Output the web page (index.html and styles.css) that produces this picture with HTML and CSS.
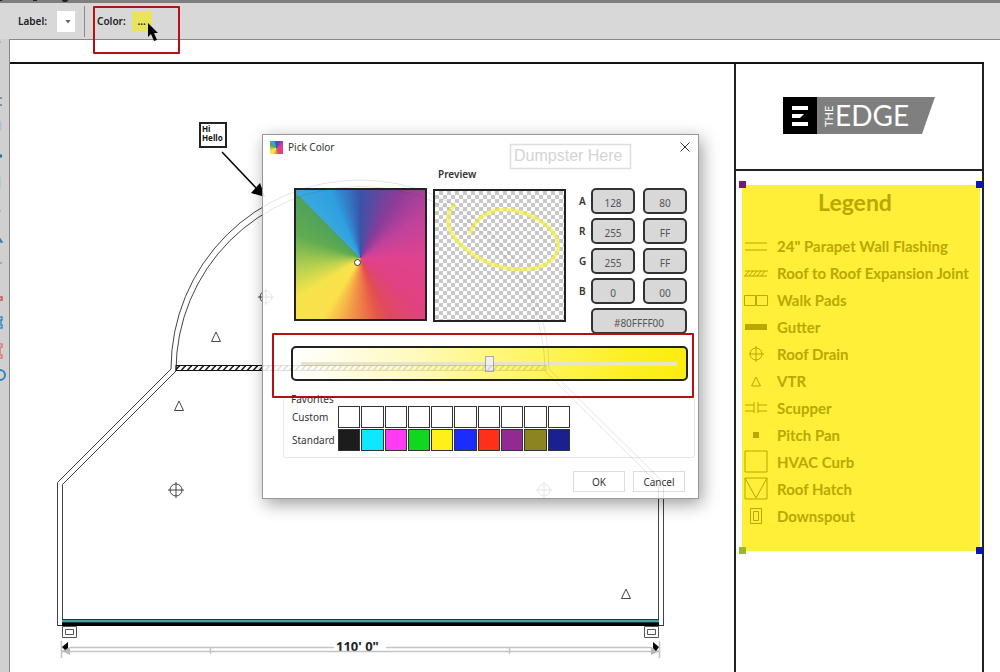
FILE: index.html
```html
<!DOCTYPE html>
<html lang="en">
<head>
<meta charset="utf-8">
<title>Roof plan – Pick Color</title>
<link rel="stylesheet" href="styles.css">
</head>
<body>
<div class="app">
  <div class="window-edge">
    <svg width="70" height="3" viewBox="0 0 70 3"><path d="M0 0h2v1H0zM33 0h4v1h-4zM62 0h6v1l-2 1h-3z" fill="#222"/></svg>
  </div>
  <header class="toolbar">
    <label for="label-select">Label:</label>
    <span class="drop"><select id="label-select" aria-label="Label"><option></option></select></span>
    <span class="divider"></span>
    <label for="color-button">Color:</label>
    <button id="color-button" class="color-button" type="button">...</button>
    <div class="callout"></div>
    <svg class="cursor" width="12" height="20" viewBox="0 0 12 20"><path d="M1 1v14l3-3 3 7 3-1-3-7h4z" fill="#000"/></svg>
  </header>

  <div class="workspace">
    <nav class="tools" aria-label="Tools">
      <svg width="9" height="360" viewBox="0 40 9 360" fill="none" stroke-width="1.5">
        <path d="M0 43h1M0 212h1" stroke="#aaa"/>
        <path d="M0 99h2M0 106h2" stroke="#5d7f97"/>
        <path d="M0 122q2 5 0 10M0 178v12" stroke="#a9c4d6"/>
        <path d="M0 157h2" stroke="#1d6fa8" stroke-width="3"/>
        <path d="M0 240l2 3H0z" stroke="#3b7dab"/>
        <path d="M0 264h2" stroke="#9ab" stroke-width="2"/>
        <path d="M0 298h2v3H0" stroke="#d05050"/>
        <path d="M0 318h2v3H0M1 321v4M0 326h2v3H0" stroke="#3b8cc4"/>
        <path d="M0 345h2v3H0M0 356h2v3H0M0 348v8" stroke="#e07a7a"/>
        <path d="M0 371a5 5 0 0 1 0 10" stroke="#2d86c8" stroke-width="2"/>
      </svg>
    </nav>

    <main class="canvas">
      <div class="sheet">
        <div class="sheet-plan"></div>
        <aside class="title-block">
          <div class="logo-cell">
            <svg class="logo" width="152" height="37" viewBox="0 0 152 37" role="img" aria-label="The Edge">
              <path d="M0 0h34v37H0z" fill="#000"/>
              <path d="M34 0h118l-13 37H34z" fill="#7f7f7f"/>
              <path d="M9 9h16v4H9zM9 17h12l-4 4H9zM9 25h16v4H9z" fill="#fff"/>
              <text x="52" y="29" class="logo-name">EDGE</text>
              <text transform="translate(50 30) rotate(-90)" class="logo-the">THE</text>
            </svg>
          </div>
          <section class="legend">
            <i class="handle tl"></i><i class="handle tr"></i><i class="handle bl"></i><i class="handle br"></i>
            <h2>Legend</h2>
            <ul>
              <li><svg viewBox="0 0 24 24"><path d="M1 9h22M1 16h22"/></svg>24" Parapet Wall Flashing</li>
              <li><svg viewBox="0 0 24 24"><path d="M1 10h23M0 15h23M1 15l4-5M5 15l4-5M9 15l4-5M13 15l4-5M17 15l4-5"/></svg>Roof to Roof Expansion Joint</li>
              <li><svg viewBox="0 0 24 24"><path d="M.5 7.500h11v10H.5zM12.500 7.500h11v10h-11z"/></svg>Walk Pads</li>
              <li><svg viewBox="0 0 24 24"><path class="solid" d="M1 9h22v6H1z"/></svg>Gutter</li>
              <li><svg viewBox="0 0 24 24"><circle cx="12" cy="12" r="6"/><path d="M12 4v16M5 12h15"/></svg>Roof Drain</li>
              <li><svg viewBox="0 0 24 24"><path d="M12 8l4.500 9h-9z"/></svg>VTR</li>
              <li><svg viewBox="0 0 24 24"><path d="M1 9h9M1 15h9M10 6v11M14 6v11M14 9h9M14 15h9"/></svg>Scupper</li>
              <li><svg viewBox="0 0 24 24"><path class="solid" d="M9 9h6v6H9z"/></svg>Pitch Pan</li>
              <li><svg viewBox="0 0 24 24"><path d="M1 1h22v21H1z"/></svg>HVAC Curb</li>
              <li><svg viewBox="0 0 24 24"><path d="M1 1h22v21H1zM1 1l11 20L23 1"/></svg>Roof Hatch</li>
              <li><svg viewBox="0 0 24 24"><path d="M6.500 4.500h11v15h-11zM9.500 7.500h5v9h-5z"/></svg>Downspout</li>
            </ul>
          </section>
        </aside>
      </div>

      <svg class="plan" width="725" height="633" viewBox="10 40 725 633">
        <defs>
          <pattern id="hatch" width="6" height="7" patternUnits="userSpaceOnUse" y="365"><path d="M0 7L6 0" stroke="#222" stroke-width="1.500"/></pattern>
          <g id="drain"><circle r="6"/><path d="M-8 0H8M0-8V8"/></g>
          <path id="vtr" d="M0-5L4.500 4.500h-9z"/>
          <g id="outline" fill="none" stroke="#444">
            <path d="M57.500 625V482.500L171 369A189 189 0 0 1 549 369L663.500 482.500V625"/>
            <path d="M62.500 620V484.500L176 371A184 184 0 0 1 545 371L658.500 484.500V620"/>
            <rect x="176" y="365.500" width="370" height="5" fill="url(#hatch)" stroke="#111"/>
            <use href="#vtr" x="216" y="337"/>
            <use href="#vtr" x="179" y="406"/>
            <use href="#vtr" x="626" y="594"/>
            <use href="#drain" x="176" y="490"/>
            <use href="#drain" x="266" y="297"/>
            <use href="#drain" x="544" y="490"/>
            <path d="M222 152L257 189" stroke="#000" stroke-width="1.500"/>
            <path d="M265 197l-14-4 9-10z" fill="#000" stroke="none"/>
          </g>
        </defs>
        <use href="#outline"/>
        <path d="M57 625.500h5M659 625.500h5" stroke="#333"/>
        <rect x="62" y="619" width="597" height="4" fill="#173c40"/>
        <rect x="62" y="620" width="597" height="2" fill="#4d9ea2"/>
        <rect x="62" y="623" width="597" height="3" fill="#000"/>
        <g fill="none" stroke="#555">
          <path d="M62.500 626.500h14v11h-14zM65.500 629.500h8v5h-8zM644.500 626.500h14v11h-14zM647.500 629.500h8v5h-8z"/>
        </g>
        <text x="336" y="651" class="dimension">110' 0"</text>
        <g stroke="#c4c4c4" fill="#b8b8b8">
          <path d="M70 647.500H334M386 647.500H652M62 651.500H659M61.500 641v17M659.500 641v17M210.500 648v6M509.500 648v6" fill="none" stroke-width="1.500"/>
          <path d="M62 651l8-4v8zM659 651l-8-4v8z" stroke="none"/>
        </g>
        <path d="M68 642v6l-3 2-3-3zM653 642l6 5-3 4-3-3z" fill="#000"/>
        <rect x="200" y="123" width="26" height="24" fill="#fff" stroke="#222" stroke-width="2"/>
        <text x="202" y="132" class="note">Hi</text>
        <text x="202" y="141" class="note">Hello</text>
      </svg>

      <section class="dialog" role="dialog" aria-labelledby="dialog-title">
        <header class="dialog-title">
          <i class="wheel-icon"></i>
          <h1 id="dialog-title">Pick Color</h1>
          <button class="close" type="button" aria-label="Close"><svg width="10" height="10" viewBox="0 0 10 10"><path d="M.5.5l9 9M9.500.5l-9 9" stroke="#333" fill="none"/></svg></button>
        </header>

        <div class="picker">
          <div class="wheel"><i class="wheel-dot"></i></div>
          <div class="preview-column">
            <h2>Preview</h2>
            <div class="preview">
              <svg viewBox="0 0 130 130"><path d="M20 13C5 30 15 51 45 68C72 84 119 84 124 58C126 38 96 19 70 19C53 19 41 28 35 43" fill="none" stroke="#f4f04a" stroke-opacity=".7" stroke-width="4"/></svg>
            </div>
          </div>
          <div class="channels">
            <label for="a">A</label><input id="a" value="128"><input aria-label="A hex" value="80">
            <label for="r">R</label><input id="r" value="255"><input aria-label="R hex" value="FF">
            <label for="g">G</label><input id="g" value="255"><input aria-label="G hex" value="FF">
            <label for="b">B</label><input id="b" value="0"><input aria-label="B hex" value="00">
            <input class="hex" aria-label="Color code" value="#80FFFF00">
          </div>
        </div>

        <div class="alpha">
          <div class="alpha-bar"><input type="range" min="0" max="255" value="128" aria-label="Opacity"></div>
        </div>

        <fieldset class="favorites">
          <legend>Favorites</legend>
          <span>Custom</span>
          <div class="swatches">
            <button type="button" aria-label="Custom 1"></button><button type="button" aria-label="Custom 2"></button><button type="button" aria-label="Custom 3"></button><button type="button" aria-label="Custom 4"></button><button type="button" aria-label="Custom 5"></button><button type="button" aria-label="Custom 6"></button><button type="button" aria-label="Custom 7"></button><button type="button" aria-label="Custom 8"></button><button type="button" aria-label="Custom 9"></button><button type="button" aria-label="Custom 10"></button>
          </div>
          <span>Standard</span>
          <div class="swatches">
            <button type="button" class="black" aria-label="Black"></button><button type="button" class="cyan" aria-label="Cyan"></button><button type="button" class="magenta" aria-label="Magenta"></button><button type="button" class="green" aria-label="Green"></button><button type="button" class="yellow" aria-label="Yellow"></button><button type="button" class="blue" aria-label="Blue"></button><button type="button" class="red" aria-label="Red"></button><button type="button" class="purple" aria-label="Purple"></button><button type="button" class="olive" aria-label="Olive"></button><button type="button" class="navy" aria-label="Navy"></button>
          </div>
        </fieldset>

        <footer class="actions">
          <button type="button">OK</button>
          <button type="button">Cancel</button>
        </footer>

        <svg class="ghost" viewBox="263 135 435 363">
          <use href="#outline" opacity=".14"/>
          <rect x="510.500" y="144.500" width="120" height="24" fill="none" stroke="#dedede" stroke-width="1.500"/>
          <text x="514" y="161" class="ghost-text">Dumpster Here</text>
        </svg>
      </section>
    </main>
  </div>
</div>
</body>
</html>
```
FILE: styles.css
```css
* { box-sizing: border-box; }

body {
  margin: 0;
  font-family: "Noto Sans", "Open Sans", sans-serif;
  font-size: 10px;
  color: #333;
  background: #fff;
}

button, input, select { font: inherit; color: inherit; margin: 0; padding: 0; }
h1, h2, ul, fieldset { margin: 0; padding: 0; }
svg { display: block; }

.app { display: flex; flex-direction: column; height: 100vh; overflow: hidden; }
.window-edge { height: 3px; flex: none; background: #7e7e7e; }

/* Toolbar */
.toolbar {
  position: relative;
  z-index: 2;
  flex: none;
  display: flex;
  align-items: center;
  height: 36px;
  padding-left: 18px;
  background: #d8d8d8;
  font-weight: 600;
  color: #222;
}
.drop { position: relative; margin-left: 10px; }
.drop select {
  display: block;
  width: 18px;
  height: 21px;
  appearance: none;
  border: 0;
  border-radius: 0;
  background: #fff;
}
.drop::after {
  content: "";
  position: absolute;
  right: 4px;
  top: 9px;
  width: 6px;
  height: 4px;
  background: #666;
  clip-path: polygon(0 0, 100% 0, 50% 100%);
  pointer-events: none;
}
.divider { width: 1px; height: 31px; margin: 0 12px 0 9px; background: #8a8a8a; }
.color-button {
  width: 20px;
  height: 20px;
  margin-left: 6px;
  border: 0;
  background: #e9e45a;
  font-weight: 600;
}
.callout {
  position: absolute;
  left: 93px;
  top: 3px;
  width: 87px;
  height: 48px;
  border: 2px solid #b80f14;
  border-radius: 1px;
}
.cursor { position: absolute; left: 147px; top: 19px; }

/* Workspace */
.workspace { flex: 1; display: flex; min-height: 0; }
.tools { width: 9px; flex: none; background: #d0d0d0; overflow: hidden; }
.canvas {
  position: relative;
  flex: 1;
  display: flex;
  min-width: 0;
  padding: 22px 16px 0 0;
  border-left: 1px solid #888;
  border-top: 1px solid #888;
  background: #fff;
}
.sheet { flex: 1; display: flex; border-top: 2px solid #111; }
.sheet-plan { flex: 1; }
.title-block {
  width: 250px;
  border-left: 2px solid #222;
  border-right: 2px solid #222;
}
.logo-cell {
  display: flex;
  justify-content: center;
  padding: 33px 0 35px;
  border-bottom: 2px solid #222;
}
.logo-name { font: 28px Lato, sans-serif; fill: #fff; }
.logo-the { font: 11px Lato, sans-serif; fill: #fff; }

.legend {
  position: relative;
  margin: 14px 2px 0 6px;
  height: 366px;
  padding: 4px 0 0 2px;
  background: #ffef38;
  color: #b9a800;
  font-family: Lato, sans-serif;
  font-weight: 700;
}
.legend h2 { font-size: 23px; line-height: 26px; margin: 0 14px 17px 0; text-align: center; }
.legend ul { list-style: none; }
.legend li { display: flex; align-items: center; gap: 9px; height: 27px; font-size: 15px; white-space: nowrap; }
.legend svg { width: 24px; height: 24px; flex: none; fill: none; stroke: #b9a800; stroke-width: 1; }
.legend .solid { fill: #b9a800; stroke: none; }
.handle { position: absolute; width: 7px; height: 7px; background: #0a12c4; }
.tl { left: -3px; top: -4px; background: #761a78; }
.tr { right: -3px; top: -4px; }
.bl { left: -3px; bottom: -3px; background: #97b72c; }
.br { right: -3px; bottom: -3px; }

.plan { position: absolute; left: 0; top: 0; pointer-events: none; }
.dimension { font: 700 13px "Noto Sans", sans-serif; fill: #222; }
.note { font: 700 8px "Noto Sans", sans-serif; fill: #111; }

/* Colour dialog */
.dialog {
  position: absolute;
  left: 252px;
  top: 94px;
  width: 437px;
  padding-bottom: 6px;
  border: 1px solid #999;
  background: #fff;
  box-shadow: 3px 5px 16px rgba(0, 0, 0, .38);
}
.dialog-title { display: flex; align-items: center; gap: 5px; height: 24px; padding: 0 8px 0 7px; }
.dialog-title h1 { flex: 1; font-size: 10px; font-weight: 400; }
.close { border: 0; background: none; }
.wheel-icon, .wheel {
  background: conic-gradient(at 50% 53%, #3a53a8, #8a3c98 30deg, #c0429a 55deg, #e0428f 90deg, #e04280 130deg, #e04a5c 155deg, #e85848 165deg, #f39a48 190deg, #fbe04a 212deg, #f6e34c 238deg, #b4cf50 262deg, #62ac50 290deg, #4fa25a 315deg, #38a8e0 316deg, #2fa0e0 335deg, #3a53a8);
}
.wheel-icon { width: 13px; height: 13px; }

.picker {
  display: flex;
  align-items: flex-start;
  height: 174px;
  padding: 0 10px 0 31px;
  overflow: hidden;
}
.wheel {
  display: flex;
  width: 133px;
  height: 133px;
  margin-top: 29px;
  border: 2px solid #222;
}
.wheel-dot { width: 7px; height: 7px; margin: auto; border: 1px solid #333; border-radius: 50%; background: #fff; transform: translate(-3px, 8px); }
.preview-column { margin-left: 6px; }
.preview-column h2 { height: 15px; margin: 8px 0 7px 5px; font-size: 10px; line-height: 15px; font-weight: 600; }
.preview {
  width: 133px;
  height: 133px;
  border: 2px solid #222;
  background: repeating-conic-gradient(#c8c8c8 0 25%, #fff 0 50%) 0 0 / 8px 8px;
}
.channels {
  display: grid;
  grid-template-columns: 4px 44px 44px;
  grid-auto-rows: 26px;
  gap: 4px 8px;
  margin: 29px 0 0 13px;
  align-items: center;
}
.channels label { font-weight: 600; text-align: center; }
.channels input {
  width: 100%;
  height: 26px;
  padding-top: 3px;
  border: 2px solid #333;
  border-radius: 5px;
  background: #d8d8d8;
  color: #555;
  text-align: center;
}
.channels .hex { grid-column: 2 / 4; }

.alpha {
  position: relative;
  height: 65px;
  margin: 0 4px 0 9px;
  padding: 11px 4px 0 17px;
  border: 2px solid #b80f14;
  border-radius: 1px;
}
.alpha-bar {
  display: flex;
  align-items: center;
  height: 35px;
  padding: 0 9px 0 8px;
  border: 2px solid #222;
  border-radius: 5px;
  background: linear-gradient(90deg, #fff, #fffac0 30%, #fff780 50%, #fdf022 85%, #fcec10);
}
.alpha-bar input { width: 100%; height: 16px; appearance: none; background: none; }
.alpha-bar input::-webkit-slider-runnable-track { height: 4px; background: #e8e4c8; }
.alpha-bar input::-webkit-slider-thumb {
  appearance: none;
  width: 9px;
  height: 16px;
  margin-top: -6px;
  border: 1px solid #aaa;
  background: #f0f0f0;
}

.favorites {
  position: relative;
  display: grid;
  grid-template-columns: 46px 232px;
  grid-auto-rows: 22px;
  gap: 1px 0;
  align-items: center;
  align-content: start;
  height: 60px;
  margin: 0 3px 0 20px;
  padding: 8px 0 0 8px;
  border: 1px solid #e8e8e8;
  border-top: 0;
  border-radius: 3px;
}
.favorites legend { position: absolute; left: 7px; top: -6px; padding: 0; line-height: 14px; }
.swatches { display: grid; grid-template-columns: repeat(10, 1fr); gap: 1px; }
.swatches button { height: 22px; border: 1px solid #333; background: #fff; }
.swatches .black { background: #1c1c1c; }
.swatches .cyan { background: #0ee8ff; }
.swatches .magenta { background: #ff3cf4; }
.swatches .green { background: #10d820; }
.swatches .yellow { background: #fff01a; }
.swatches .blue { background: #1c2cff; }
.swatches .red { background: #ff301a; }
.swatches .purple { background: #922a92; }
.swatches .olive { background: #8c8420; }
.swatches .navy { background: #1a2090; }

.actions { display: flex; justify-content: flex-end; gap: 8px; padding: 13px 13px 0 0; }
.actions button { width: 52px; height: 21px; border: 1px solid #ddd; background: #fff; }

.ghost { position: absolute; inset: 0; width: 100%; height: 100%; pointer-events: none; }
.ghost-text { font: 16px "Liberation Sans", Arial, sans-serif; fill: #d4d4d4; }
```
